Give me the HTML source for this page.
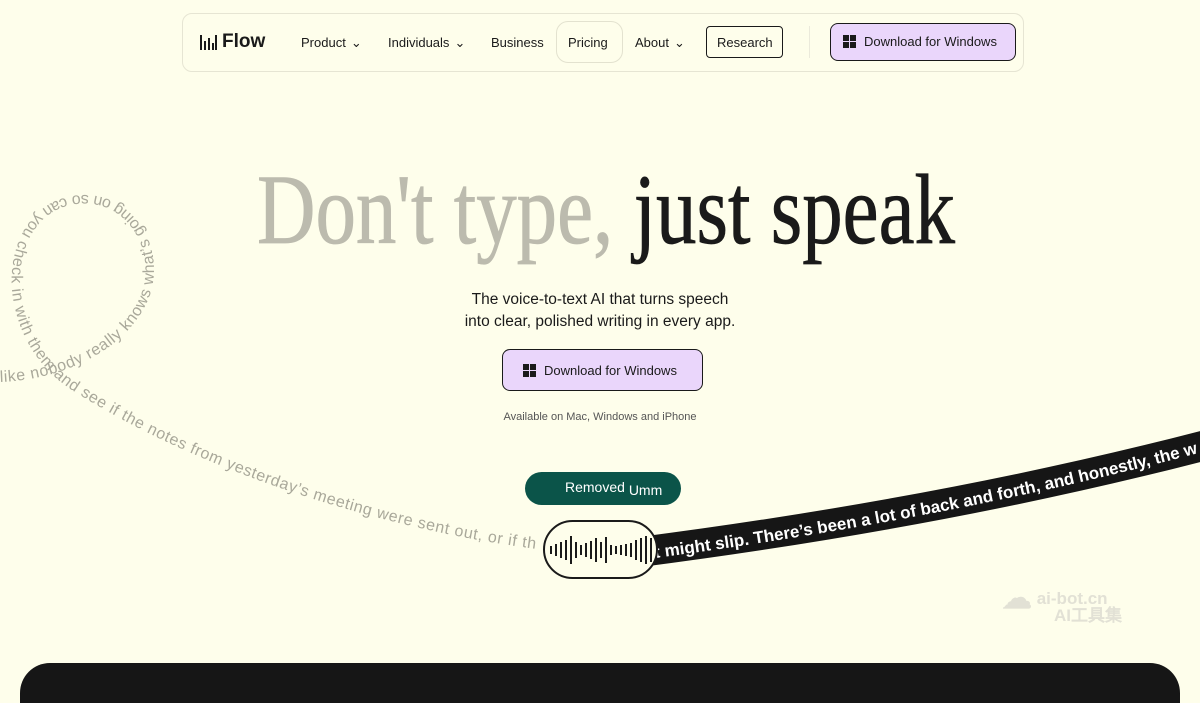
<!DOCTYPE html>
<html><head><meta charset="utf-8"><style>
*{margin:0;padding:0;box-sizing:border-box}
body{width:1200px;height:675px;background:#fefeeb;font-family:"Liberation Sans",sans-serif;position:relative;overflow:hidden;color:#1a1a1a}
.nav{position:absolute;left:182px;top:13px;width:842px;height:59px;border:1.5px solid #e6e5d3;border-radius:10px;background:#fefeeb}
.nav span,.nav div{position:absolute;font-size:13px;top:21px}
.logo{left:16px;top:17px!important;font-size:19px!important;font-weight:bold;display:flex;align-items:center;gap:5px}
.chev{font-size:9px;margin-left:5px}
.pill{position:absolute;border-radius:8px}
.btn{display:flex;align-items:center}
.win{display:inline-block;width:13px;height:13px;margin-right:8px;background:
linear-gradient(#fefeeb,#fefeeb) 6px 0/1px 13px no-repeat,
linear-gradient(#fefeeb,#fefeeb) 0 6px/13px 1px no-repeat,#1a1a1a}
</style></head><body>
<div class="nav">
  <div class="logo"><svg width="18" height="18" viewBox="0 0 18 18"><g stroke="#1a1a1a" stroke-width="2"><line x1="2" y1="2" x2="2" y2="17"/><line x1="6" y1="8" x2="6" y2="17"/><line x1="10" y1="5" x2="10" y2="17"/><line x1="14" y1="10" x2="14" y2="17"/><line x1="17" y1="2" x2="17" y2="17"/></g></svg>Flow</div>
  <span style="left:118px">Product<span class="chev" style="position:static">⌄</span></span>
  <span style="left:205px">Individuals<span class="chev" style="position:static">⌄</span></span>
  <span style="left:308px">Business</span>
  <div class="pill" style="left:373px;top:7px;width:67px;height:42px;border:1.5px solid #e3e2cf;border-radius:12px"></div>
  <span style="left:385px">Pricing</span>
  <span style="left:452px">About<span class="chev" style="position:static">⌄</span></span>
  <div class="pill" style="left:523px;top:12px;width:77px;height:32px;border:1.5px solid #1a1a1a;border-radius:4px"></div>
  <span style="left:534px">Research</span>
  <div style="left:626px;top:12px;width:1px;height:32px;background:#ebeadb"></div>
  <div class="pill" style="left:647px;top:9px;width:186px;height:38px;border:1.5px solid #1a1a1a;background:#ead6fb;border-radius:8px"></div>
  <span class="btn" style="left:660px;top:20px"><i class="win" style="background-color:#1a1a1a;background-image:linear-gradient(#ead6fb,#ead6fb),linear-gradient(#ead6fb,#ead6fb)"></i>Download for Windows</span>
</div>

<svg width="1200" height="675" style="position:absolute;left:0;top:0">
  <text x="257" y="243" font-family="Liberation Serif,serif" font-size="100" textLength="698" lengthAdjust="spacingAndGlyphs" stroke-width="0.8"><tspan fill="#bcbbae" stroke="#bcbbae">Don't type,</tspan><tspan fill="#1a1a1a" stroke="#1a1a1a"> just speak</tspan></text>
  <path id="loop" d="M 0 382 C 60 380 125 352 148 300 C 168 250 135 195 85 195 C 35 195 8 240 12 290 C 17 340 45 375 80 395 C 200 470 380 530 545 550" fill="none"/>
  <text font-family="Liberation Sans,sans-serif" font-size="16" letter-spacing="0.6" fill="#a9a89a"><textPath href="#loop">like nobody really knows what’s going on so can you check in with them and see if the notes from yesterday’s meeting were sent out, or if th</textPath></text>
  <path d="M 640 552 Q 950 512 1210 444" fill="none" stroke="#161616" stroke-width="30"/>
  <path id="bandt" d="M 655 558 Q 955 518 1210 450" fill="none"/>
  <text font-family="Liberation Sans,sans-serif" font-size="17" font-weight="bold" fill="#fff"><textPath href="#bandt">t might slip. There’s been a lot of back and forth, and honestly, the w</textPath></text>
  <rect x="544" y="521" width="113" height="57" rx="28.5" fill="#fefeeb" stroke="#1a1a1a" stroke-width="2"/>
  <g stroke="#1a1a1a" stroke-width="2">
    <line x1="551" y1="546" x2="551" y2="554"/><line x1="556" y1="544" x2="556" y2="556"/><line x1="561" y1="542" x2="561" y2="558"/><line x1="566" y1="540" x2="566" y2="560"/><line x1="571" y1="536" x2="571" y2="564"/><line x1="576" y1="542" x2="576" y2="558"/><line x1="581" y1="545" x2="581" y2="555"/><line x1="586" y1="543" x2="586" y2="557"/><line x1="591" y1="541" x2="591" y2="559"/><line x1="596" y1="538" x2="596" y2="562"/><line x1="601" y1="542" x2="601" y2="558"/><line x1="606" y1="537" x2="606" y2="563"/><line x1="611" y1="545" x2="611" y2="555"/><line x1="616" y1="546" x2="616" y2="554"/><line x1="621" y1="545" x2="621" y2="555"/><line x1="626" y1="544" x2="626" y2="556"/><line x1="631" y1="543" x2="631" y2="557"/><line x1="636" y1="540" x2="636" y2="560"/><line x1="641" y1="538" x2="641" y2="562"/><line x1="646" y1="536" x2="646" y2="564"/><line x1="651" y1="538" x2="651" y2="562"/>
  </g>
</svg>

<div style="position:absolute;left:0;width:1200px;top:289px;text-align:center;font-size:15.5px;line-height:22px;color:#1a1a1a">The voice-to-text AI that turns speech<br>into clear, polished writing in every app.</div>
<div class="btn" style="position:absolute;left:502px;top:349px;width:201px;height:42px;border:1.5px solid #1a1a1a;border-radius:8px;background:#ead6fb;font-size:13px;padding-left:20px"><i class="win" style="background-color:#1a1a1a;background-image:linear-gradient(#ead6fb,#ead6fb),linear-gradient(#ead6fb,#ead6fb)"></i>Download for Windows</div>
<div style="position:absolute;left:0;width:1200px;top:411px;text-align:center;font-size:11px;color:#555">Available on Mac, Windows and iPhone</div>
<div style="position:absolute;left:525px;top:472px;width:156px;height:33px;border-radius:17px;background:#0b5449;color:#fff;font-size:14px;padding:7px 0 0 40px">Removed <span style="position:relative;top:3px">Umm</span></div>
<div style="position:absolute;left:1002px;top:590px;color:#e2e1d5;font-weight:bold;font-size:17px;line-height:17px"><span style="font-size:30px;vertical-align:-4px">☁</span> ai-bot.cn<br><span style="margin-left:52px">AI工具集</span></div>
<div style="position:absolute;left:20px;top:663px;width:1160px;height:40px;background:#161616;border-radius:30px 30px 0 0"></div>
</body></html>
